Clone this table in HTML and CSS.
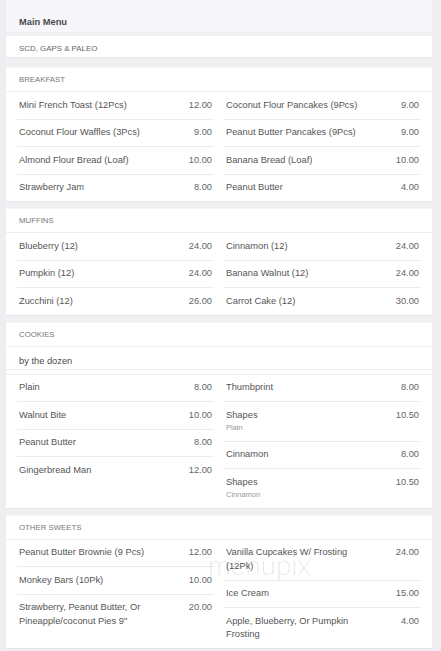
FILE: index.html
```html
<!DOCTYPE html>
<html lang="en">
<head>
<meta charset="utf-8">
<title>Main Menu</title>
<link rel="stylesheet" href="styles.css">
</head>
<body>
<div class="menu">
  <div class="menu-title">Main Menu</div>
  <div class="intro">SCD, GAPS &amp; PALEO</div>

  <section class="section">
    <div class="sec-head">BREAKFAST</div>
    <div class="cols">
      <div class="col">
        <div class="item"><div class="name">Mini French Toast (12Pcs)</div><div class="price">12.00</div></div>
        <div class="item"><div class="name">Coconut Flour Waffles (3Pcs)</div><div class="price">9.00</div></div>
        <div class="item"><div class="name">Almond Flour Bread (Loaf)</div><div class="price">10.00</div></div>
        <div class="item"><div class="name">Strawberry Jam</div><div class="price">8.00</div></div>
      </div>
      <div class="col">
        <div class="item"><div class="name">Coconut Flour Pancakes (9Pcs)</div><div class="price">9.00</div></div>
        <div class="item"><div class="name">Peanut Butter Pancakes (9Pcs)</div><div class="price">9.00</div></div>
        <div class="item"><div class="name">Banana Bread (Loaf)</div><div class="price">10.00</div></div>
        <div class="item"><div class="name">Peanut Butter</div><div class="price">4.00</div></div>
      </div>
    </div>
  </section>

  <section class="section">
    <div class="sec-head">MUFFINS</div>
    <div class="cols">
      <div class="col">
        <div class="item"><div class="name">Blueberry (12)</div><div class="price">24.00</div></div>
        <div class="item"><div class="name">Pumpkin (12)</div><div class="price">24.00</div></div>
        <div class="item"><div class="name">Zucchini (12)</div><div class="price">26.00</div></div>
      </div>
      <div class="col">
        <div class="item"><div class="name">Cinnamon (12)</div><div class="price">24.00</div></div>
        <div class="item"><div class="name">Banana Walnut (12)</div><div class="price">24.00</div></div>
        <div class="item"><div class="name">Carrot Cake (12)</div><div class="price">30.00</div></div>
      </div>
    </div>
  </section>

  <section class="section">
    <div class="sec-head">COOKIES</div>
    <div class="note">by the dozen</div>
    <div class="cols cols-after-note">
      <div class="col">
        <div class="item"><div class="name">Plain</div><div class="price">8.00</div></div>
        <div class="item"><div class="name">Walnut Bite</div><div class="price">10.00</div></div>
        <div class="item"><div class="name">Peanut Butter</div><div class="price">8.00</div></div>
        <div class="item"><div class="name">Gingerbread Man</div><div class="price">12.00</div></div>
      </div>
      <div class="col">
        <div class="item"><div class="name">Thumbprint</div><div class="price">8.00</div></div>
        <div class="item"><div class="name">Shapes<div class="sub">Plain</div></div><div class="price">10.50</div></div>
        <div class="item"><div class="name">Cinnamon</div><div class="price">8.00</div></div>
        <div class="item"><div class="name">Shapes<div class="sub">Cinnamon</div></div><div class="price">10.50</div></div>
      </div>
    </div>
  </section>

  <section class="section">
    <div class="sec-head">OTHER SWEETS</div>
    <div class="cols">
      <div class="col">
        <div class="item"><div class="name">Peanut Butter Brownie (9 Pcs)</div><div class="price">12.00</div></div>
        <div class="item"><div class="name">Monkey Bars (10Pk)</div><div class="price">10.00</div></div>
        <div class="item"><div class="name">Strawberry, Peanut Butter, Or Pineapple/coconut Pies 9"</div><div class="price">20.00</div></div>
      </div>
      <div class="col">
        <div class="item"><div class="name">Vanilla Cupcakes W/ Frosting (12Pk)</div><div class="price">24.00</div></div>
        <div class="item"><div class="name">Ice Cream</div><div class="price">15.00</div></div>
        <div class="item"><div class="name">Apple, Blueberry, Or Pumpkin Frosting</div><div class="price">4.00</div></div>
      </div>
    </div>
  </section>
</div>
<div class="watermark">menupix</div>
</body>
</html>
```
FILE: styles.css
```css
html, body {
  margin: 0;
}
body {
  background: #ededf2;
  font-family: "Liberation Sans", Arial, sans-serif;
  padding: 0 9px 0 6px;
  position: relative;
  overflow: hidden;
}
.menu {
  background: #f0f0f3;
}
.menu-title {
  background: #f7f7fb;
  padding: 15px 13px 3px;
  line-height: 14px;
  font-size: 9.3px;
  font-weight: bold;
  color: #4a4a4a;
  margin-bottom: 4px;
}
.intro {
  background: #fff;
  height: 22px;
  box-sizing: border-box;
  padding: 5.5px 13px 0;
  line-height: 13px;
  font-size: 7.9px;
  color: #666;
  border-bottom: 1px solid #e6e6e6;
  margin-bottom: 9px;
}
.section {
  background: #fff;
  border-top: 1px solid #f6f6f6;
  border-bottom: 1px solid #e6e6e6;
  margin-bottom: 6px;
}
.sec-head {
  height: 23px;
  padding: 0 13px;
  line-height: 24px;
  font-size: 7.8px;
  color: #777;
  border-bottom: 1px solid #eeeeee;
}
.note {
  height: 23px;
  box-sizing: border-box;
  padding: 8px 13px 0;
  line-height: 13.5px;
  font-size: 9.3px;
  color: #4a4a4a;
  border-bottom: 1px solid #eeeeee;
  margin-bottom: 4px;
}
.cols-after-note {
  border-top: 1px solid #eeeeee;
}
.cols {
  display: flex;
  gap: 10px;
  padding: 0 11px;
}
.col {
  flex: 1;
  min-width: 0;
}
.item {
  display: flex;
  padding: 6.5px 2px;
  line-height: 13.5px;
  border-bottom: 1px solid #ececec;
  font-size: 9.3px;
  color: #555;
}
.item:last-child {
  border-bottom: none;
}
.name {
  flex: 1;
  min-width: 0;
}
.price {
  width: 48px;
  text-align: right;
  color: #666;
}
.sub {
  font-size: 7.5px;
  color: #9a9a9a;
  line-height: 12px;
}
.watermark {
  position: absolute;
  left: 208px;
  top: 550px;
  font-family: Lato, "Liberation Sans", sans-serif;
  font-weight: 300;
  font-size: 28px;
  line-height: 28px;
  color: rgba(0, 0, 0, 0.1);
  pointer-events: none;
}
```
